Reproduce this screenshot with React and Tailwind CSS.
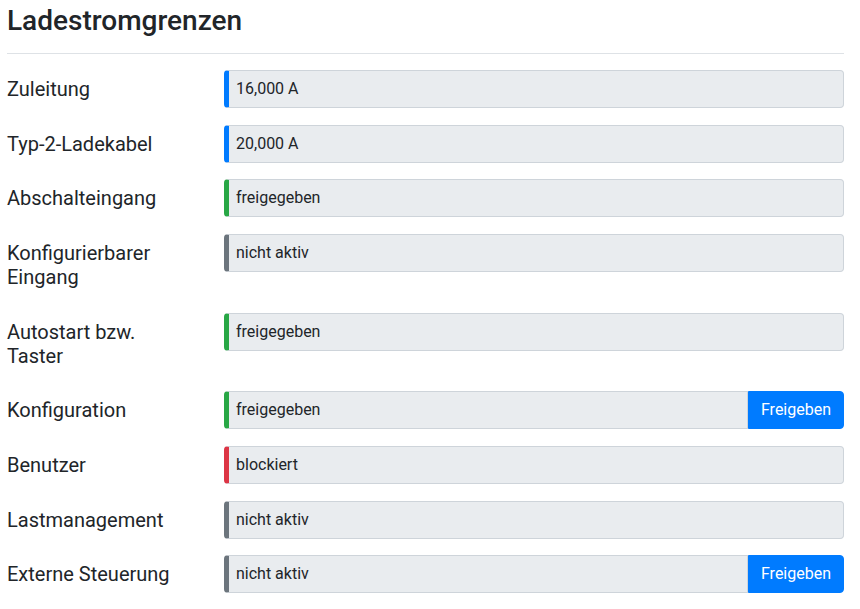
import React from "react";

const rows = [
  { label: "Zuleitung", value: "16,000 A", color: "border-l-[#007bff]" },
  { label: "Typ-2-Ladekabel", value: "20,000 A", color: "border-l-[#007bff]" },
  { label: "Abschalteingang", value: "freigegeben", color: "border-l-[#28a745]" },
  { label: "Konfigurierbarer Eingang", value: "nicht aktiv", color: "border-l-[#6c757d]" },
  { label: "Autostart bzw. Taster", value: "freigegeben", color: "border-l-[#28a745]" },
  { label: "Konfiguration", value: "freigegeben", color: "border-l-[#28a745]", button: true },
  { label: "Benutzer", value: "blockiert", color: "border-l-[#dc3545]" },
  { label: "Lastmanagement", value: "nicht aktiv", color: "border-l-[#6c757d]" },
  { label: "Externe Steuerung", value: "nicht aktiv", color: "border-l-[#6c757d]", button: true },
];

export default function App() {
  return (
    <div
      className="bg-white text-[#212529] pl-[7px] pr-[16px] pt-[3.5px]"
      style={{ fontFamily: "Roboto, 'Liberation Sans', sans-serif" }}
    >
      <h3 className="text-[28px] font-medium leading-[1.2] pb-[16px]">Ladestromgrenzen</h3>
      <hr className="border-0 border-t border-[#dee2e6] mb-[16px]" />
      <div className="flex flex-col gap-[16.65px]">
        {rows.map((r) => (
          <div key={r.label} className="flex items-start">
            <div className="w-[217px] shrink-0 text-[20px] leading-[24px] py-[7px] pr-[40px]">
              {r.label}
            </div>
            <div className="flex flex-1 h-[38px]">
              <div
                className={`flex flex-1 items-center bg-[#e9ecef] border border-[#ced4da] border-l-[5px] ${r.color} pl-[7px] text-[16px] ${
                  r.button ? "rounded-l-[4px]" : "rounded-[4px]"
                }`}
              >
                {r.value}
              </div>
              {r.button && (
                <button className="w-[96px] bg-[#007bff] text-white text-[16px] rounded-r-[4px] border border-[#007bff]">
                  Freigeben
                </button>
              )}
            </div>
          </div>
        ))}
      </div>
    </div>
  );
}
